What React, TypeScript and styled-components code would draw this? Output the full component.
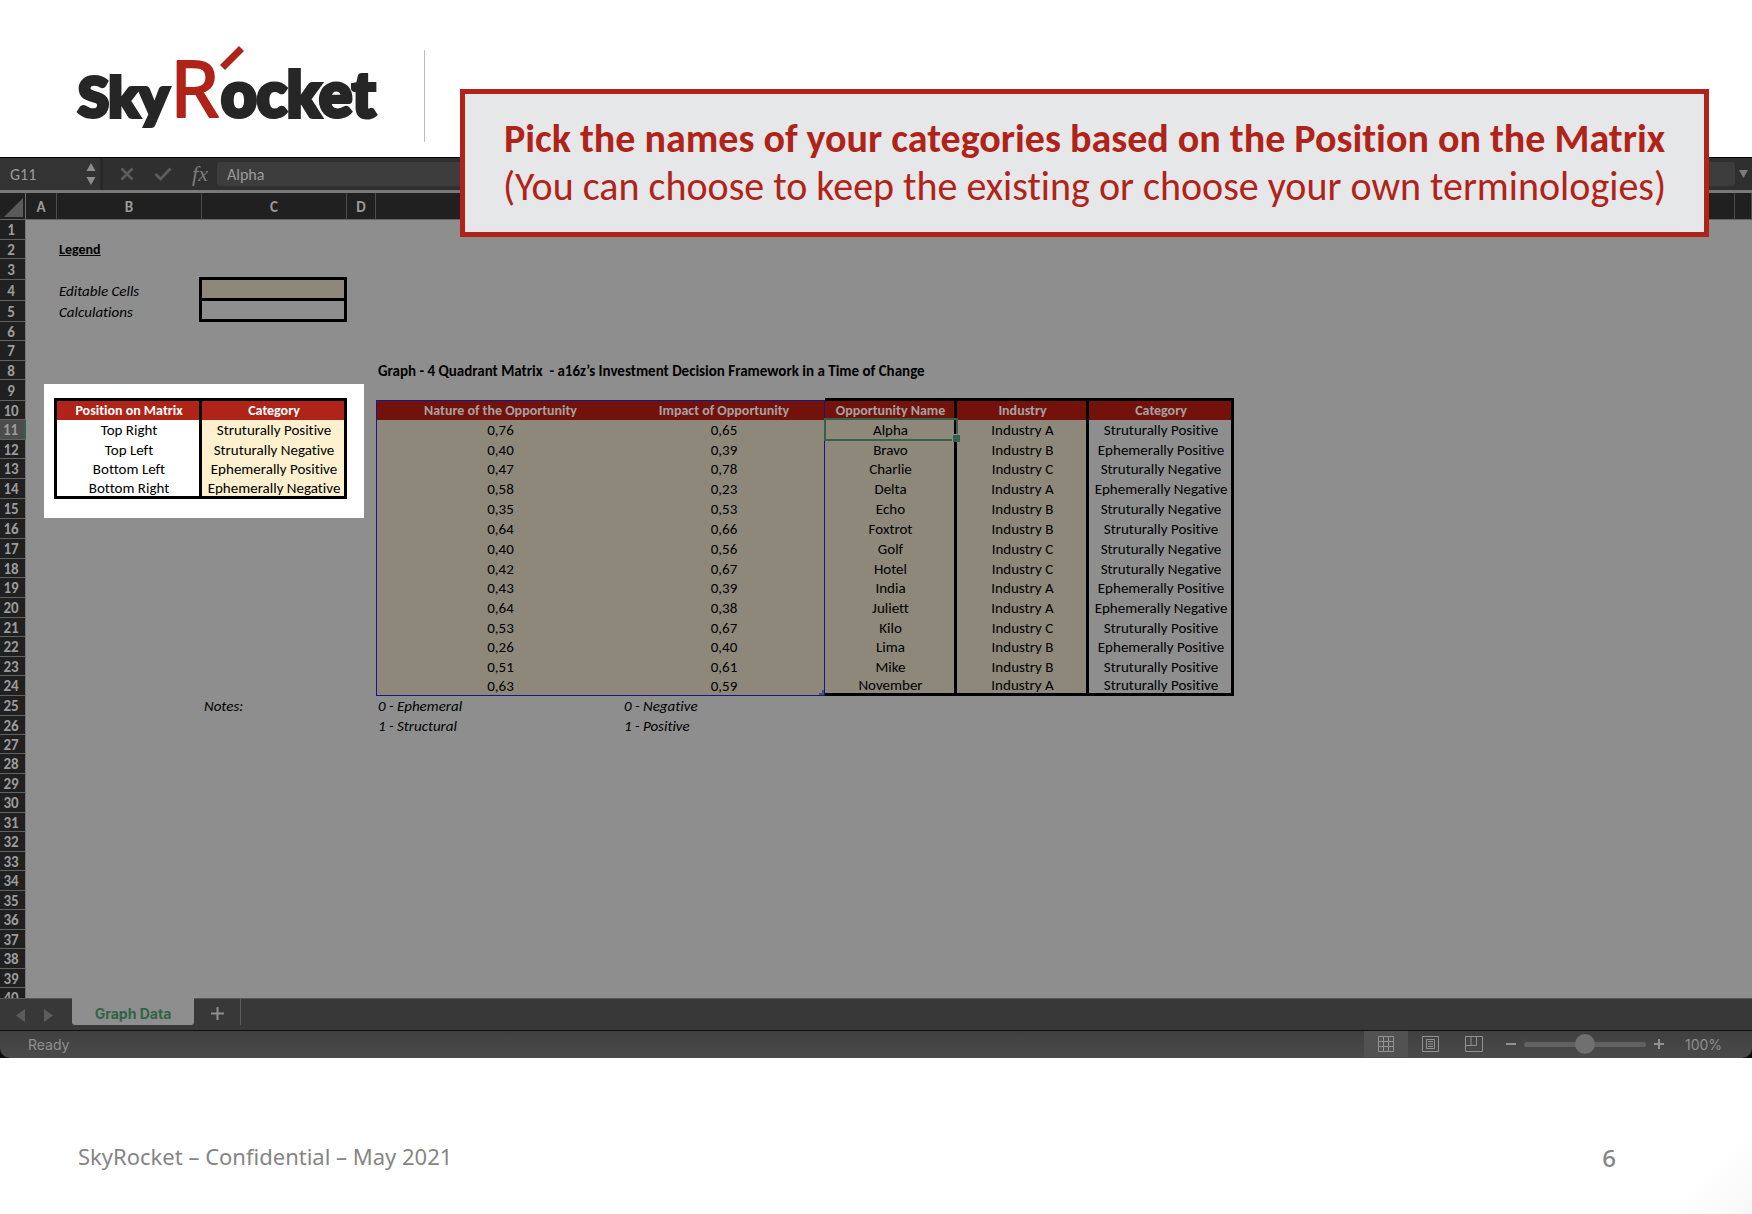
import React from "react";
import styled, { createGlobalStyle, css } from "styled-components";

const SHEET_FONT = `Calibri, Carlito, Lato, "Liberation Sans", sans-serif`;
const UI_FONT = `Inter, "Liberation Sans", sans-serif`;

const GlobalStyle = createGlobalStyle`
  * { box-sizing: border-box; }
  body { margin: 0; background: #fff; }
  button, input { font: inherit; color: inherit; border: 0; padding: 0; margin: 0; background: none; }
`;

const Page = styled.div`
  position: relative;
  display: flex;
  flex-direction: column;
  height: 100vh;
  background: linear-gradient(135deg, #fff 97%, #f7f7f7 100%);
  font-family: ${SHEET_FONT};
  font-variant-ligatures: none;
`;

const Header = styled.header`
  display: flex;
  align-items: flex-end;
  gap: 45px;
  padding: 44px 77px 15px;
`;

const LogoArt = styled.svg`
  display: block;
  width: 302px;
  height: 98px;
  overflow: visible;
`;

const Divider = styled.div`
  width: 1px;
  height: 92px;
  background: #bdbdbd;
`;

const Callout = styled.section`
  position: absolute;
  top: 89px;
  left: 460px;
  right: 43px;
  padding: 21px 0;
  border: 5px solid #b02318;
  background: #e6e7e9;
  color: #b02318;
  text-align: center;
  white-space: nowrap;
`;

const CalloutTitle = styled.h1`
  margin: 0;
  font-size: 40px;
  line-height: 48px;
  font-weight: 700;
`;

const CalloutNote = styled.p`
  margin: 0;
  font-size: 40px;
  line-height: 48px;
`;

const Workbook = styled.main`
  flex: 1;
  min-height: 0;
  display: flex;
  flex-direction: column;
  background: #0a0d10;
`;

const FormulaBar = styled.div`
  display: flex;
  align-items: center;
  height: 36px;
  border-top: 1px solid #000;
  border-bottom: 3px solid #797979;
  background: #2f2f2f;
  color: #9b9b9b;
  font-size: 16px;
`;

const NameBox = styled.div`
  display: flex;
  align-items: center;
  justify-content: space-between;
  width: 103px;
  height: 100%;
  padding: 0 4px 0 10px;
  border-right: 3px solid #282828;
  background: #333;
`;

const NameInput = styled.input`
  width: 60px;
`;

const FormulaTools = styled.div`
  display: flex;
  align-items: center;
  justify-content: space-between;
  width: 114px;
  padding: 0 9px 0 17px;
`;

const IconButton = styled.button`
  display: grid;
  place-items: center;
  color: ${(p) => p.color || "#5c5c5c"};
`;

const FxButton = styled.button`
  color: #7c7c7c;
  font-family: "Liberation Serif", serif;
  font-style: italic;
  font-size: 22px;
  line-height: 24px;
`;

const FormulaInput = styled.input`
  flex: 1;
  height: 24px;
  padding: 0 10px;
  border-radius: 3px;
  background: #3d3d3d;
`;

const ExpandButton = styled(IconButton)`
  width: 17px;
`;

const Sheet = styled.div`
  position: relative;
  flex: 1;
  min-height: 0;
  overflow: hidden;
  background: #8e8e8e;
`;

const Spotlight = styled.div`
  position: absolute;
  top: 191px;
  left: 44px;
  width: 320px;
  height: 134px;
  background: #fff;
`;

const Grid = styled.table`
  position: relative;
  width: 100%;
  table-layout: fixed;
  border-collapse: separate;
  border-spacing: 0;
  font-size: 15px;
  line-height: 14px;
  color: #000;
`;

const Col = styled.col<{ $w?: number }>`
  width: ${(p) => (p.$w ? `${p.$w}px` : "auto")};
`;

const ColumnHead = styled.th`
  height: 27px;
  padding: 2px 0 0;
  border-right: 1px solid #4d4d4d;
  border-bottom: 1px solid #666;
  background: #202020;
  color: #9b9b9b;
`;

const Corner = styled(ColumnHead)`
  border-right-color: #6c6c6c;
`;

const CornerMark = styled.svg`
  display: block;
  margin: 0 2px 0 auto;
`;

const Row = styled.tr<{ $h: number }>`
  height: ${(p) => p.$h}px;
`;

const RowHead = styled.th<{ $active: boolean }>`
  padding: 1px 3px 0 0;
  border-right: ${(p) => (p.$active ? "2px solid #35604a" : "1px solid #777")};
  border-bottom: 1px solid #626262;
  background: ${(p) => (p.$active ? "#4c4c4c" : "#202020")};
  color: #9b9b9b;
`;

type Fill = "none" | "input" | "inputLit" | "head" | "headLit";

const fills: Record<Fill, ReturnType<typeof css>> = {
  none: css``,
  input: css`background: #8d887a;`,
  inputLit: css`background: #fcf0cf;`,
  head: css`background: #73120b; color: #a3a3a3;`,
  headLit: css`background: #b02318; color: #fff;`,
};

const Cell = styled.td<{
  $fill: Fill;
  $center: boolean;
  $bold: boolean;
  $italic: boolean;
  $underline: boolean;
  $small: boolean;
  $edges: string;
}>`
  position: relative;
  padding: ${(p) => (p.$edges.includes("b") ? 1 : 0)}px 0 0 2px;
  font-size: ${(p) => (p.$small ? 14 : 15)}px;
  white-space: nowrap;
  text-align: ${(p) => (p.$center ? "center" : "left")};
  font-weight: ${(p) => (p.$bold ? 700 : 400)};
  font-style: ${(p) => (p.$italic ? "italic" : "normal")};
  text-decoration: ${(p) => (p.$underline ? "underline" : "none")};
  ${(p) => fills[p.$fill]}
  ${(p) => p.$edges.includes("r") && css`border-right: 3px solid #000;`}
  ${(p) => p.$edges.includes("b") && css`border-bottom: 3px solid #000;`}
  ${(p) => p.$edges.includes("L") && css`border-left: 1px solid #16168c;`}
  ${(p) => p.$edges.includes("R") && css`border-right: 1px solid #16168c;`}
  ${(p) => p.$edges.includes("B") && css`border-bottom: 1px solid #16168c;`}
`;

/* Joins the outline of the cell below and to the right at its corner. */
const Joint = styled.span`
  position: absolute;
  right: 0;
  bottom: 0;
  width: 3px;
  height: 3px;
  background: #000;
`;

const Selection = styled.span`
  position: absolute;
  z-index: 1;
  inset: -2px -4px -1px -1px;
  border: 2px solid #35604a;
  &::after {
    content: "";
    position: absolute;
    right: -4px;
    bottom: -3px;
    width: 7px;
    height: 7px;
    background: #35604a;
    border-left: 1px solid #8e8e8e;
    border-top: 1px solid #8e8e8e;
  }
`;

const RangeHandle = styled.span`
  position: absolute;
  right: 0;
  bottom: 0;
  width: 5px;
  height: 5px;
  background: #47507c;
  clip-path: polygon(100% 0, 100% 100%, 0 100%, 0 60%, 60% 60%, 60% 0);
`;

const TabBar = styled.nav`
  display: flex;
  align-items: flex-start;
  height: 32px;
  border-top: 1px solid #585858;
  background: #383838;
`;

const TabArrows = styled.div`
  display: flex;
  align-items: center;
  gap: 19px;
  width: 72px;
  height: 100%;
  padding: 2px 0 0 16px;
`;

const SheetTab = styled.button`
  width: 122px;
  height: 27px;
  margin-top: -1px;
  padding-top: 4px;
  border-radius: 0 0 3px 3px;
  background: #8e8e8e;
  color: #2f6546;
  font-family: ${UI_FONT};
  font-size: 14px;
  font-weight: 700;
`;

const AddSheet = styled.button`
  display: grid;
  place-items: center;
  width: 47px;
  height: 26px;
  padding-top: 3px;
  border-right: 1px solid #5c5c5c;
  color: #8e8e8e;
`;

const StatusBar = styled.div`
  display: flex;
  align-items: center;
  height: 28px;
  padding: 0 28px 1px 28px;
  border-top: 1px solid #111;
  border-radius: 0 0 10px 10px;
  background: linear-gradient(#404040, #4a4a4a);
  color: #8f8f8f;
  font-family: ${UI_FONT};
  font-size: 14px;
`;

const Ready = styled.span`
  flex: 1;
`;

const ViewButton = styled.button<{ $on?: boolean }>`
  display: grid;
  place-items: center;
  width: 44px;
  height: 26px;
  color: #929292;
  background: ${(p) => (p.$on ? "#525252" : "transparent")};
`;

const ZoomGroup = styled.div`
  display: flex;
  align-items: center;
  gap: 8px;
  padding-left: 10px;
`;

const ZoomSlider = styled.input`
  appearance: none;
  width: 122px;
  height: 5px;
  border-radius: 3px;
  background: #626262;
  &::-webkit-slider-thumb {
    appearance: none;
    width: 20px;
    height: 20px;
    border-radius: 50%;
    background: #707070;
  }
`;

const ZoomValue = styled.output`
  width: 52px;
  padding-left: 13px;
`;

const Footer = styled.footer`
  display: flex;
  justify-content: space-between;
  align-items: flex-start;
  padding: 82px 136px 38px 78px;
  color: #858585;
  font-family: "Noto Sans", sans-serif;
  font-size: 22px;
  line-height: 32px;
`;

const PageNumber = styled.span`
  font-size: 24px;
  line-height: 36px;
  font-weight: 500;
`;

const COLUMNS: { name: string; w?: number }[] = [
  { name: "A", w: 31 },
  { name: "B", w: 145 },
  { name: "C", w: 145 },
  { name: "D", w: 29 },
  { name: "", w: 246 },
  { name: "", w: 203 },
  { name: "", w: 132 },
  { name: "", w: 132 },
  { name: "", w: 145 },
  { name: "" },
  { name: "", w: 17 },
];
const KEYS = "ABCDEFGHIJK".split("");

const SP = "Struturally Positive";
const SN = "Struturally Negative";
const EP = "Ephemerally Positive";
const EN = "Ephemerally Negative";

const OPPORTUNITIES = [
  ["0,76", "0,65", "Alpha", "Industry A", SP],
  ["0,40", "0,39", "Bravo", "Industry B", EP],
  ["0,47", "0,78", "Charlie", "Industry C", SN],
  ["0,58", "0,23", "Delta", "Industry A", EN],
  ["0,35", "0,53", "Echo", "Industry B", SN],
  ["0,64", "0,66", "Foxtrot", "Industry B", SP],
  ["0,40", "0,56", "Golf", "Industry C", SN],
  ["0,42", "0,67", "Hotel", "Industry C", SN],
  ["0,43", "0,39", "India", "Industry A", EP],
  ["0,64", "0,38", "Juliett", "Industry A", EN],
  ["0,53", "0,67", "Kilo", "Industry C", SP],
  ["0,26", "0,40", "Lima", "Industry B", EP],
  ["0,51", "0,61", "Mike", "Industry B", SP],
  ["0,63", "0,59", "November", "Industry A", SP],
];

const MATRIX = [
  ["Top Right", SP],
  ["Top Left", SN],
  ["Bottom Left", EP],
  ["Bottom Right", EN],
];

const ROW_HEIGHTS = [
  20, 19, 21, 21, 21, 19, 20, 19, 21, 19,
  20, 19, 20, 20, 20, 20, 20, 19, 20, 20,
  19, 20, 19, 20, 20, 19, 19, 20, 19, 20,
  19, 20, 19, 20, 19, 20, 19, 20, 19, 20,
];

interface CellSpec {
  text?: string;
  fill?: Fill;
  center?: boolean;
  bold?: boolean;
  italic?: boolean;
  underline?: boolean;
  small?: boolean;
  edges?: string;
  extra?: React.ReactNode;
}

const heading = (text: string, fill: Fill, edges: string): CellSpec => ({
  text,
  fill,
  edges,
  center: true,
  bold: true,
  small: true,
});

const cells: Record<string, CellSpec> = {
  B2: { text: "Legend", bold: true, underline: true, small: true },
  B3: { extra: <Joint /> },
  C3: { edges: "b" },
  B4: { text: "Editable Cells", italic: true, edges: "r" },
  C4: { fill: "input", edges: "rb" },
  B5: { text: "Calculations", italic: true, edges: "r" },
  C5: { edges: "rb" },
  E8: { text: "Graph - 4 Quadrant Matrix \u00a0- a16z’s Investment Decision Framework in a Time of Change", bold: true },
  A9: { extra: <Joint /> },
  B9: { edges: "b" },
  C9: { edges: "b" },
  E9: { edges: "B" },
  F9: { edges: "B" },
  G9: { edges: "b" },
  H9: { edges: "b" },
  I9: { edges: "b" },
  A10: { edges: "r" },
  B10: heading("Position on Matrix", "headLit", "r"),
  C10: heading("Category", "headLit", "r"),
  E10: heading("Nature of the Opportunity", "head", "L"),
  F10: heading("Impact of Opportunity", "head", "R"),
  G10: heading("Opportunity Name", "head", "r"),
  H10: heading("Industry", "head", "r"),
  I10: heading("Category", "head", "r"),
  C25: { text: "Notes:", italic: true },
  E25: { text: "0 - Ephemeral", italic: true },
  F25: { text: "0 - Negative", italic: true },
  E26: { text: "1 - Structural", italic: true },
  F26: { text: "1 - Positive", italic: true },
};

MATRIX.forEach(([position, category], i) => {
  const row = 11 + i;
  const end = i === MATRIX.length - 1 ? "b" : "";
  cells[`A${row}`] = { edges: "r" };
  cells[`B${row}`] = { text: position, center: true, edges: "r" + end };
  cells[`C${row}`] = { text: category, center: true, fill: "inputLit", edges: "r" + end };
});

OPPORTUNITIES.forEach(([nature, impact, name, industry, category], i) => {
  const row = 11 + i;
  const last = i === OPPORTUNITIES.length - 1;
  const end = last ? "b" : "";
  cells[`E${row}`] = { text: nature, center: true, fill: "input", edges: "L" + (last ? "B" : "") };
  cells[`F${row}`] = {
    text: impact,
    center: true,
    fill: "input",
    edges: "R" + (last ? "B" : ""),
    extra: last ? <RangeHandle /> : undefined,
  };
  cells[`G${row}`] = {
    text: name,
    center: true,
    fill: "input",
    edges: "r" + end,
    extra: i === 0 ? <Selection /> : undefined,
  };
  cells[`H${row}`] = { text: industry, center: true, fill: "input", edges: "r" + end };
  cells[`I${row}`] = { text: category, center: true, edges: "r" + end };
});

/* Cells whose text runs on over the empty neighbours take their columns too. */
const SPANS: Record<string, number> = { E8: 4 };

function Logo() {
  return (
    <LogoArt viewBox="77 44 302 98" role="img" aria-label="SkyRocket">
      <g fill="#262626" stroke="#262626" strokeWidth="4" fontFamily="Lato, sans-serif" fontWeight="900">
        <text x="78" y="117" fontSize="56">Sky</text>
        <text x="221" y="117" fontSize="62">ocket</text>
      </g>
      <text
        x="170"
        y="117"
        fontSize="79"
        fill="#b02318"
        stroke="#b02318"
        strokeWidth="2"
        strokeLinejoin="round"
        fontFamily="Noto Sans, sans-serif"
      >
        R
      </text>
      <path d="M220 65 L239 46 L244 51 L225 70 Z" fill="#b02318" />
    </LogoArt>
  );
}

function SheetRow({ row, height }: { row: number; height: number }) {
  const tds: React.ReactNode[] = [];
  for (let c = 0; c < KEYS.length; c++) {
    const id = KEYS[c] + row;
    const spec = cells[id] || {};
    const span = SPANS[id] || 1;
    tds.push(
      <Cell
        key={id}
        colSpan={span}
        $fill={spec.fill || "none"}
        $center={!!spec.center}
        $bold={!!spec.bold}
        $italic={!!spec.italic}
        $underline={!!spec.underline}
        $small={!!spec.small}
        $edges={spec.edges || ""}
      >
        {spec.text}
        {spec.extra}
      </Cell>
    );
    c += span - 1;
  }
  return (
    <Row $h={height}>
      <RowHead scope="row" $active={row === 11}>{row}</RowHead>
      {tds}
    </Row>
  );
}

export default function App() {
  return (
    <Page>
      <GlobalStyle />
      <Header>
        <Logo />
        <Divider />
      </Header>

      <Workbook>
        <FormulaBar>
          <NameBox>
            <NameInput aria-label="Name box" defaultValue="G11" />
            <IconButton aria-label="Choose a name" color="#8e8e8e">
              <svg width="10" height="24" viewBox="0 0 10 24" fill="currentColor">
                <path d="M5 1 L9.5 9 H0.500 Z M5 23 L9.5 15 H0.500 Z" />
              </svg>
            </IconButton>
          </NameBox>
          <FormulaTools>
            <IconButton aria-label="Cancel">
              <svg width="14" height="14" viewBox="0 0 14 14" stroke="currentColor" strokeWidth="2.600">
                <path d="M1.500 1.500 L12.500 12.500 M12.500 1.500 L1.500 12.500" />
              </svg>
            </IconButton>
            <IconButton aria-label="Enter">
              <svg width="18" height="14" viewBox="0 0 18 14" fill="none" stroke="currentColor" strokeWidth="2.800">
                <path d="M1.500 7 L6.500 12 L16.500 1.500" />
              </svg>
            </IconButton>
            <FxButton aria-label="Insert function">fx</FxButton>
          </FormulaTools>
          <FormulaInput aria-label="Formula" defaultValue="Alpha" />
          <ExpandButton aria-label="Expand formula bar" color="#7c7c7c">
            <svg width="9" height="8" viewBox="0 0 9 8" fill="currentColor">
              <path d="M0 0 H9 L4.500 8 Z" />
            </svg>
          </ExpandButton>
        </FormulaBar>

        <Sheet>
          <Spotlight />
          <Grid>
            <colgroup>
              <Col $w={26} />
              {COLUMNS.map((c, i) => (
                <Col key={i} $w={c.w} />
              ))}
            </colgroup>
            <thead>
              <tr>
                <Corner aria-label="Select all">
                  <CornerMark width="19" height="19" viewBox="0 0 19 19">
                    <path d="M19 0 V19 H0 Z" fill="#5a5a5a" />
                  </CornerMark>
                </Corner>
                {COLUMNS.map((c, i) => (
                  <ColumnHead key={i} scope="col">{c.name}</ColumnHead>
                ))}
              </tr>
            </thead>
            <tbody>
              {ROW_HEIGHTS.map((h, i) => (
                <SheetRow key={i} row={i + 1} height={h} />
              ))}
            </tbody>
          </Grid>
        </Sheet>

        <TabBar>
          <TabArrows>
            <IconButton aria-label="Previous sheet">
              <svg width="9" height="13" viewBox="0 0 9 13" fill="currentColor"><path d="M9 0 V13 L0 6.500 Z" /></svg>
            </IconButton>
            <IconButton aria-label="Next sheet">
              <svg width="9" height="13" viewBox="0 0 9 13" fill="currentColor"><path d="M0 0 V13 L9 6.500 Z" /></svg>
            </IconButton>
          </TabArrows>
          <SheetTab>Graph Data</SheetTab>
          <AddSheet aria-label="Add sheet">
            <svg width="13" height="13" viewBox="0 0 13 13" stroke="currentColor" strokeWidth="2">
              <path d="M6.500 0 V13 M0 6.500 H13" />
            </svg>
          </AddSheet>
        </TabBar>

        <StatusBar>
          <Ready>Ready</Ready>
          <ViewButton $on aria-label="Normal view">
            <svg width="16" height="16" viewBox="0 0 16 16" fill="none" stroke="currentColor">
              <path d="M.5 .5 H15.500 V15.500 H.5 Z M5.500 0 V16 M10.500 0 V16 M0 5.500 H16 M0 10.500 H16" />
            </svg>
          </ViewButton>
          <ViewButton aria-label="Page layout view">
            <svg width="17" height="16" viewBox="0 0 17 16" fill="none" stroke="currentColor">
              <path d="M.5 .5 H16.500 V15.500 H.5 Z M4.500 3.500 H12.500 V12.500 H4.500 Z M6 5.500 H11 M6 8 H11 M6 10.500 H11" />
            </svg>
          </ViewButton>
          <ViewButton aria-label="Page break view">
            <svg width="18" height="16" viewBox="0 0 18 16" fill="none" stroke="currentColor">
              <path d="M.5 .5 H17.500 V15.500 H.5 Z M.5 9.500 H11.500 V.5 M6 .5 V9.500" />
            </svg>
          </ViewButton>
          <ZoomGroup>
            <IconButton aria-label="Zoom out" color="#929292">
              <svg width="10" height="10" viewBox="0 0 10 10" stroke="currentColor" strokeWidth="2"><path d="M0 5 H10" /></svg>
            </IconButton>
            <ZoomSlider type="range" aria-label="Zoom" min="0" max="100" defaultValue="50" />
            <IconButton aria-label="Zoom in" color="#929292">
              <svg width="10" height="10" viewBox="0 0 10 10" stroke="currentColor" strokeWidth="2"><path d="M0 5 H10 M5 0 V10" /></svg>
            </IconButton>
            <ZoomValue>100%</ZoomValue>
          </ZoomGroup>
        </StatusBar>
      </Workbook>

      <Footer>
        <span>SkyRocket – Confidential – May 2021</span>
        <PageNumber>6</PageNumber>
      </Footer>

      <Callout>
        <CalloutTitle>Pick the names of your categories based on the Position on the Matrix</CalloutTitle>
        <CalloutNote>(You can choose to keep the existing or choose your own terminologies)</CalloutNote>
      </Callout>
    </Page>
  );
}
